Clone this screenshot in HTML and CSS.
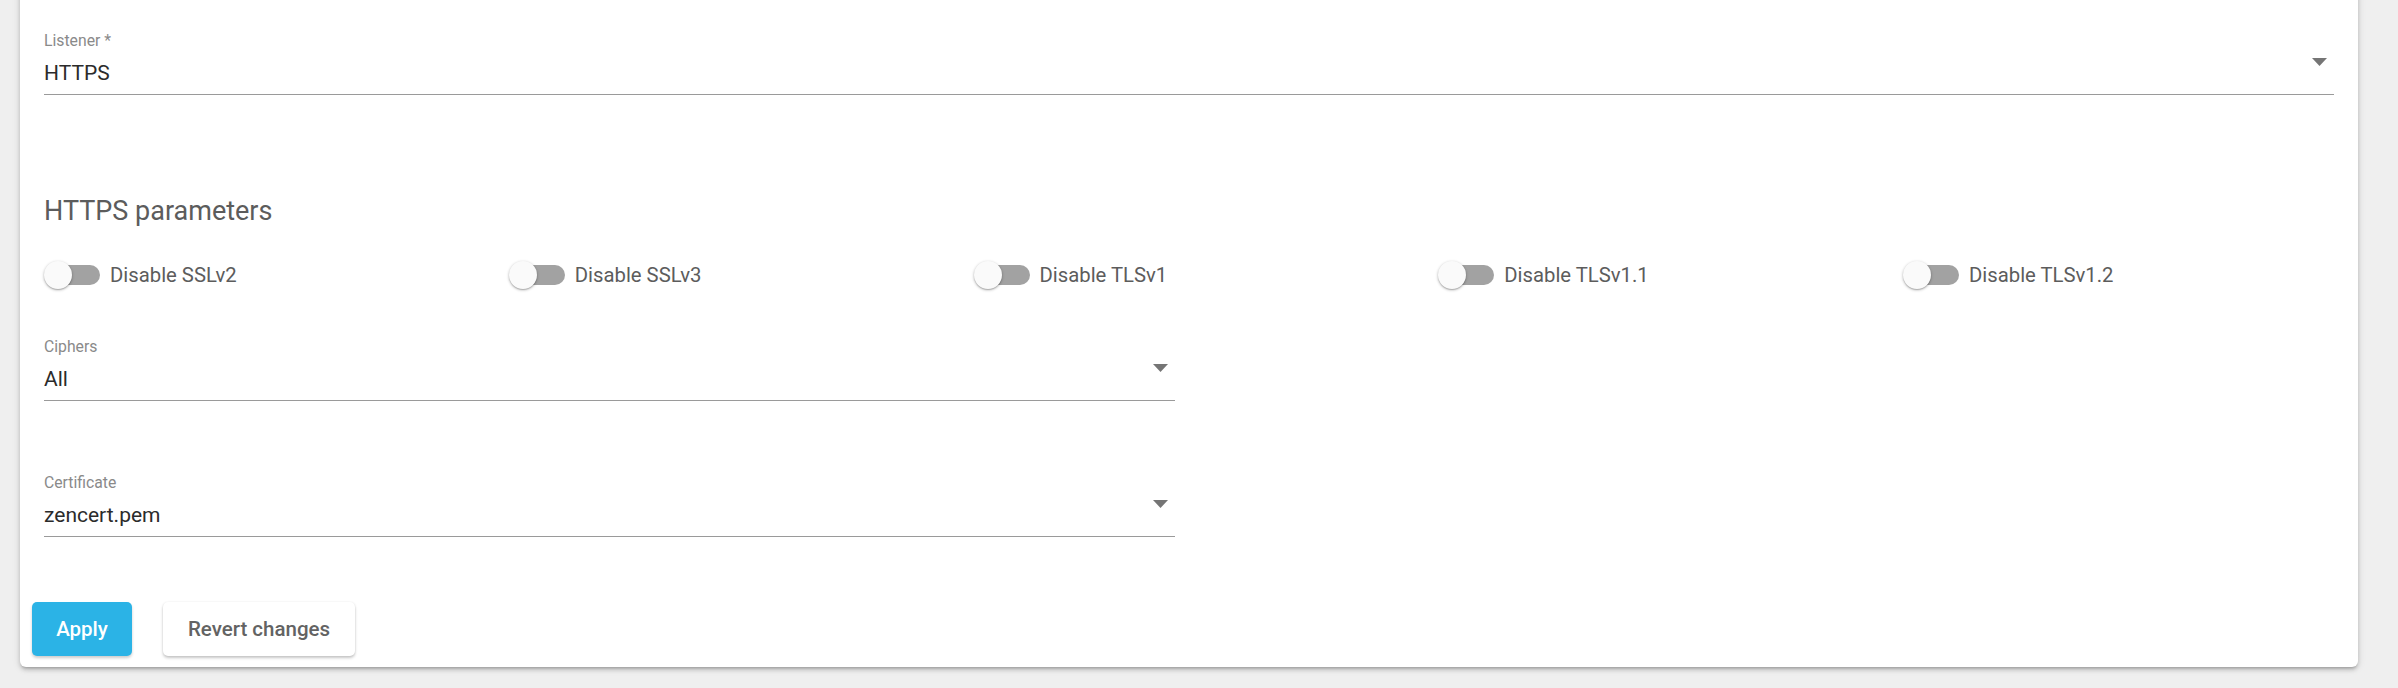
FILE: index.html
```html
<!DOCTYPE html>
<html lang="en">
<head>
<meta charset="utf-8">
<title>HTTPS listener</title>
<link rel="stylesheet" href="styles.css">
</head>
<body>
<div class="page">
  <div class="card">
    <div class="card-body">
      <div class="field field-full">
        <div class="field-label">Listener *</div>
        <div class="field-value">
          <span class="value-text">HTTPS</span>
          <svg class="arrow" width="15" height="8" viewBox="0 0 15 8"><path d="M0 0 H15 L7.5 8 Z" fill="#757575"/></svg>
        </div>
      </div>

      <h2 class="section-title">HTTPS parameters</h2>

      <div class="toggles">
        <label class="toggle"><span class="switch"></span><span class="toggle-text">Disable SSLv2</span></label>
        <label class="toggle"><span class="switch"></span><span class="toggle-text">Disable SSLv3</span></label>
        <label class="toggle"><span class="switch"></span><span class="toggle-text">Disable TLSv1</span></label>
        <label class="toggle"><span class="switch"></span><span class="toggle-text">Disable TLSv1.1</span></label>
        <label class="toggle"><span class="switch"></span><span class="toggle-text">Disable TLSv1.2</span></label>
      </div>

      <div class="field field-half ciphers">
        <div class="field-label">Ciphers</div>
        <div class="field-value">
          <span class="value-text">All</span>
          <svg class="arrow" width="15" height="8" viewBox="0 0 15 8"><path d="M0 0 H15 L7.5 8 Z" fill="#757575"/></svg>
        </div>
      </div>

      <div class="field field-half certificate">
        <div class="field-label">Certificate</div>
        <div class="field-value">
          <span class="value-text">zencert.pem</span>
          <svg class="arrow" width="15" height="8" viewBox="0 0 15 8"><path d="M0 0 H15 L7.5 8 Z" fill="#757575"/></svg>
        </div>
      </div>
    </div>

    <div class="card-actions">
      <button class="btn btn-primary" type="button">Apply</button>
      <button class="btn btn-default" type="button">Revert changes</button>
    </div>
  </div>
</div>
</body>
</html>
```
FILE: styles.css
```css
html, body {
  margin: 0;
  padding: 0;
}

body {
  background: #efefef;
  font-family: Roboto, "Liberation Sans", Arial, sans-serif;
  width: 2398px;
  height: 688px;
  overflow: hidden;
}

.page {
  padding: 0 40px 0 20px;
}

.card {
  margin-top: -20px;
  width: 2338px;
  background: #ffffff;
  border-radius: 0 0 6px 6px;
  box-shadow: 0 3px 3px -2px rgba(0,0,0,0.2), 0 3px 4px 0 rgba(0,0,0,0.14), 0 1px 8px 0 rgba(0,0,0,0.12);
}

.card-body {
  padding: 51px 24px 0 24px;
}

.field {
  display: flex;
  flex-direction: column;
}

.field-full {
  width: 2290px;
}

.field-half {
  width: 1131px;
}

.field-label {
  font-size: 15.75px;
  line-height: 20px;
  color: #8a8a8a;
}

.field-value {
  display: flex;
  align-items: flex-start;
  padding: 7px 0 6px 0;
  border-bottom: 1px solid #9a9a9a;
}

.value-text {
  flex: 1;
  font-size: 21px;
  line-height: 30px;
  color: #2b2b2b;
}

.arrow {
  margin-top: 0;
  margin-right: 7px;
  flex: none;
}

.section-title {
  margin: 98px 0 0 0;
  font-size: 27px;
  line-height: 36px;
  font-weight: 400;
  color: #5c5c5c;
}

.toggles {
  margin-top: 30px;
  display: grid;
  grid-template-columns: repeat(5, 464.75px);
}

.toggle {
  display: flex;
  align-items: center;
  height: 32px;
}

.switch {
  position: relative;
  width: 56px;
  height: 28px;
  flex: none;
}

.switch::before {
  content: "";
  position: absolute;
  left: 6px;
  top: 4px;
  width: 50px;
  height: 20px;
  border-radius: 10px;
  background: #a2a2a2;
}

.switch::after {
  content: "";
  position: absolute;
  left: 0;
  top: 0;
  width: 28px;
  height: 28px;
  border-radius: 50%;
  background: #fafafa;
  box-shadow: 0 1px 3px rgba(0,0,0,0.3), 0 1px 1px rgba(0,0,0,0.14);
}

.toggle-text {
  margin-left: 10px;
  font-size: 20.3px;
  line-height: 28px;
  color: #5c5c5c;
}

.ciphers {
  margin-top: 46px;
}

.certificate {
  margin-top: 72px;
}

.card-actions {
  display: flex;
  gap: 31px;
  padding: 65px 12px 11px 12px;
}

.btn {
  height: 54px;
  padding: 0 24px;
  border: none;
  border-radius: 5px;
  font-family: Roboto, "Liberation Sans", Arial, sans-serif;
  font-size: 20.5px;
  font-weight: 500;
  cursor: pointer;
}

.btn-primary {
  width: 100px;
  padding: 0;
  background: #2bb3e6;
  color: #ffffff;
  box-shadow: 0 2px 3px rgba(0,0,0,0.2);
}

.btn-default {
  width: 192px;
  padding: 0;
  background: #ffffff;
  color: #636363;
  box-shadow: 0 2px 3px rgba(0,0,0,0.22), 0 0 2px rgba(0,0,0,0.08);
}
```
